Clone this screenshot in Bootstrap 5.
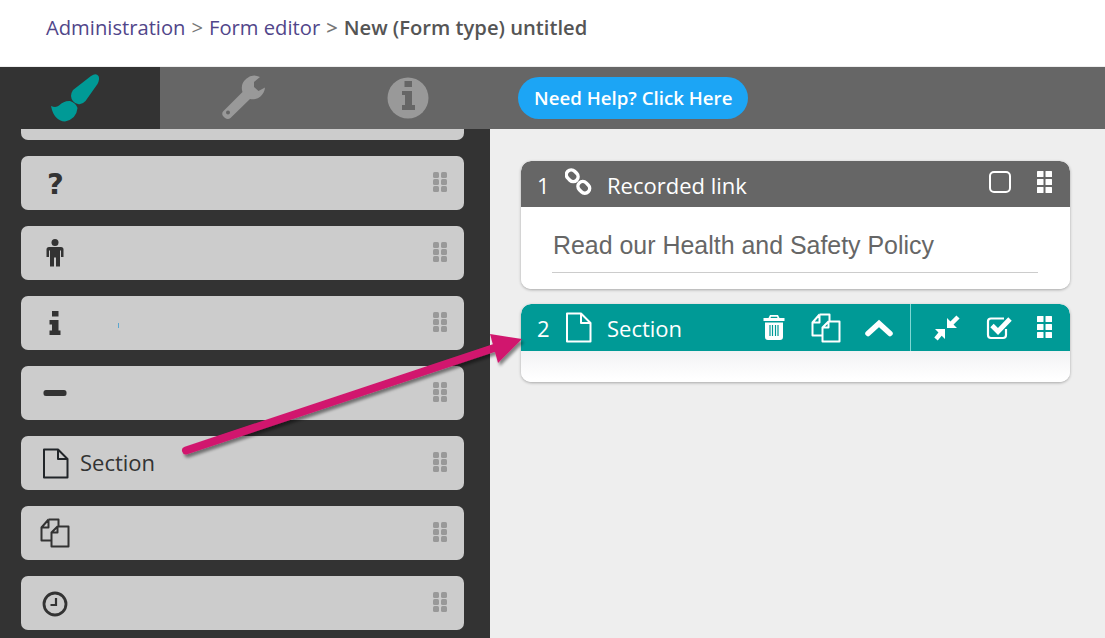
<!DOCTYPE html>
<html lang="en">
<head>
<meta charset="utf-8">
<title>Form editor</title>
<link href="https://cdn.jsdelivr.net/npm/bootstrap@5.3.0/dist/css/bootstrap.min.css" rel="stylesheet">
<style>
html,body{height:638px;overflow:hidden}
body{font-family:"Open Sans",sans-serif;background:#fff;color:#333;position:relative}
.crumbbar{height:67px;padding-left:46px;padding-bottom:11px;font-size:20.2px;border-bottom:1px solid #eee}
.breadcrumb{--bs-breadcrumb-divider:">";--bs-breadcrumb-margin-bottom:0;--bs-breadcrumb-item-padding-x:6px;--bs-breadcrumb-divider-color:#777;--bs-breadcrumb-item-active-color:#555}
.breadcrumb a{color:#51468a;text-decoration:none}
.breadcrumb .active{font-weight:600}
.leftcol{width:490px;flex:none;background:#333}
.tabrow{height:62px;background:#666}
.maintab{height:62px;width:165px;flex:none}
.maintab.first{width:160px;background:#333}
.helpbtn{--bs-btn-bg:#1ca5f5;--bs-btn-color:#fff;--bs-btn-hover-bg:#1ca5f5;--bs-btn-hover-color:#fff;--bs-btn-border-width:0;--bs-btn-border-radius:21px;--bs-btn-font-size:18.7px;--bs-btn-font-weight:600;--bs-btn-padding-x:16px;--bs-btn-padding-y:0;height:42px;margin-left:28px;line-height:42px;white-space:nowrap}
.tool-list{height:509px;overflow:hidden;padding:0 26px 0 21px;background:#333}
.tool{height:54px;background:#ccc;border-radius:7px;margin-bottom:16px;flex:none;color:#333;font-size:22px}
.tool.cut{margin-top:-43px}
.toolicon{width:50px;margin-left:9px;flex:none;display:flex;justify-content:center;align-items:center}
.tool-label{margin-top:-2px}
.qmark{font-family:"DejaVu Sans",sans-serif;font-weight:700;font-size:29px;line-height:1;color:#333;margin-top:3px;margin-left:1px}
.clockface{margin-top:2px}
.speck{width:1px;height:5px;background:#5ba6cf;margin-left:38px;margin-top:4px}
.grip{fill:currentColor}
.tool .grip-wrap{margin-left:auto;margin-right:17px;margin-top:-2px;color:#999;display:flex}
.canvas{background:#eee;padding:32px 35px 0 31px;min-width:0}
.fcard{--bs-card-border-width:0;--bs-card-border-radius:10px;--bs-card-inner-border-radius:10px;--bs-card-cap-padding-x:0;--bs-card-cap-padding-y:0;--bs-card-cap-bg:#666;--bs-card-cap-color:#fff;--bs-card-spacer-y:0;--bs-card-spacer-x:0;box-shadow:0 1px 3px rgba(0,0,0,.3);margin-bottom:15px;overflow:hidden}
.fcard .card-header{height:46px;font-size:22px;padding-left:16px;border-bottom:0;color:#fff;line-height:1}
.fcard.sel .card-header{height:47px;background:#009a96}
.fnum{width:28px;flex:none;line-height:1}
.ficon{width:27px;margin-right:15px;flex:none;display:flex;justify-content:center}
.flabel{line-height:1}
.fcard:not(.sel) .fnum,.fcard:not(.sel) .flabel{margin-top:2px}
.tools-right{margin-left:auto;height:100%;padding-right:18px}
.sepbar{width:1px;align-self:stretch;background:#7fd8d4}
.linkbody{height:82px;background:#fff;padding:0 32px 0 31px;border:0}
.linktext{font-family:"Liberation Sans",Arial,sans-serif;font-size:24.93px;color:#666;height:66px;line-height:76px;padding-left:1px;border-bottom:1px solid #ccc;white-space:nowrap}
.emptybody{height:31px;background:linear-gradient(180deg,#f2f2f4,#fff 90%)}
.arrowlay{position:absolute;left:0;top:0;pointer-events:none}
</style>
</head>
<body>
<svg width="0" height="0" class="d-none" aria-hidden="true">
  <symbol id="i-doc" viewBox="0 0 27 31"><path d="M2 1.5H16L25.500 11V29.500H2ZM16 1.500V11H25.500" fill="none" stroke="currentColor" stroke-width="2" stroke-linejoin="round"/></symbol>
  <symbol id="i-copy" viewBox="0 0 30 30"><path d="M8.500 1.500H18.500V8M8.500 1.500L1.500 9.500V22.500H11.500M8.500 1.500V9.500H1.500M17.500 8.500H28.500V28.500H11.500V14.500ZM17.500 8.500V14.500H11.500" fill="none" stroke="currentColor" stroke-width="2" stroke-linejoin="round"/></symbol>
  <symbol id="i-grip" viewBox="0 0 14 20"><g class="grip"><rect x="0" y="0" width="6" height="6" rx="1.500"/><rect x="8" y="0" width="6" height="6" rx="1.500"/><rect x="0" y="7" width="6" height="6" rx="1.500"/><rect x="8" y="7" width="6" height="6" rx="1.500"/><rect x="0" y="14" width="6" height="6" rx="1.500"/><rect x="8" y="14" width="6" height="6" rx="1.500"/></g></symbol>
  <symbol id="i-gripw" viewBox="0 0 15 22"><g class="grip"><rect x="0" y="0" width="6.500" height="6" rx=".5"/><rect x="8.500" y="0" width="6.500" height="6" rx=".5"/><rect x="0" y="8" width="6.500" height="6" rx=".5"/><rect x="8.500" y="8" width="6.500" height="6" rx=".5"/><rect x="0" y="16" width="6.500" height="6" rx=".5"/><rect x="8.500" y="16" width="6.500" height="6" rx=".5"/></g></symbol>
</svg>

<header class="crumbbar d-flex align-items-center">
  <nav aria-label="breadcrumb">
    <ol class="breadcrumb mb-0">
      <li class="breadcrumb-item"><a href="#">Administration</a></li>
      <li class="breadcrumb-item"><a href="#">Form editor</a></li>
      <li class="breadcrumb-item active" aria-current="page">New (Form type) untitled</li>
    </ol>
  </nav>
</header>

<div class="tabrow d-flex align-items-center">
  <div class="maintab first d-flex align-items-center justify-content-center">
    <svg width="60" height="55" viewBox="50 71 60 55"><path fill="#009a96" d="M91 76Q96 72.500 98.500 76Q100 79 97.500 84L85.500 101Q82 105 78 104Q71.500 102.500 71 96Q71 93 73 90ZM51 106Q56 108 59 105.500Q64 100.500 70 101Q76 103 77.500 108Q76.500 119 65 121.500Q54 121 51 106Z"/></svg>
  </div>
  <div class="maintab d-flex align-items-center justify-content-center">
    <svg width="48" height="46" viewBox="219 76 48 46"><path fill="#999" d="M260 78A12.500 12.500 0 0 0 242.500 93L223 112.500Q221.500 114.500 223 117L225 119Q228 121 230.500 119L250 100A12.500 12.500 0 0 0 265 88.500L258.500 92L254 88L254 83Z"/><circle cx="228" cy="113.500" r="2" fill="#666"/></svg>
  </div>
  <div class="maintab d-flex align-items-center justify-content-center">
    <svg width="42" height="42" viewBox="387 77 42 42"><circle cx="408" cy="98" r="20.500" fill="#999"/><path fill="#666" d="M404.500 81H412V87H404.500ZM402 91H412V105H415V110H402V105H405V95H402Z"/></svg>
  </div>
  <a href="#" class="btn helpbtn">Need Help? Click Here</a>
</div>

<div class="d-flex" style="height:509px">
  <aside class="leftcol tool-list d-flex flex-column">
    <div class="tool cut d-flex align-items-center"></div>
    <div class="tool d-flex align-items-center">
      <span class="toolicon"><span class="qmark">?</span></span>
      <span class="grip-wrap"><svg width="14" height="20"><use href="#i-grip"/></svg></span>
    </div>
    <div class="tool d-flex align-items-center">
      <span class="toolicon"><svg width="18" height="28" viewBox="0 0 18 28"><circle cx="9" cy="3.500" r="3.500" fill="#333"/><path fill="#333" d="M3 8H15Q17.500 8 17.500 10.500V18H15V11.500H14V27.500H10V18.500H8V27.500H4V11.500H3V18H.5V10.500Q.5 8 3 8Z"/></svg></span>
      <span class="grip-wrap"><svg width="14" height="20"><use href="#i-grip"/></svg></span>
    </div>
    <div class="tool d-flex align-items-center">
      <span class="toolicon"><svg width="12" height="24" viewBox="0 0 12 24"><path fill="#333" d="M3 0H9.500V5.500H3ZM.5 9H9.500V19.500H11.500V24H.5V19.500H3V13.500H.5Z"/></svg></span>
      <span class="speck"></span>
      <span class="grip-wrap"><svg width="14" height="20"><use href="#i-grip"/></svg></span>
    </div>
    <div class="tool d-flex align-items-center">
      <span class="toolicon"><svg width="24" height="8" viewBox="0 0 24 8"><rect x=".5" y="1" width="23" height="6" rx="2.500" fill="#333"/></svg></span>
      <span class="grip-wrap"><svg width="14" height="20"><use href="#i-grip"/></svg></span>
    </div>
    <div class="tool d-flex align-items-center">
      <span class="toolicon"><svg width="27" height="31" class="text-body"><use href="#i-doc"/></svg></span>
      <span class="tool-label">Section</span>
      <span class="grip-wrap"><svg width="14" height="20"><use href="#i-grip"/></svg></span>
    </div>
    <div class="tool d-flex align-items-center">
      <span class="toolicon"><svg width="30" height="30"><use href="#i-copy"/></svg></span>
      <span class="grip-wrap"><svg width="14" height="20"><use href="#i-grip"/></svg></span>
    </div>
    <div class="tool d-flex align-items-center">
      <span class="toolicon"><svg class="clockface" width="26" height="26" viewBox="0 0 26 26"><circle cx="13" cy="13" r="11" fill="none" stroke="#333" stroke-width="2.800"/><path d="M14 7V14H8.500" fill="none" stroke="#333" stroke-width="2.200"/></svg></span>
      <span class="grip-wrap"><svg width="14" height="20"><use href="#i-grip"/></svg></span>
    </div>
  </aside>

  <main class="canvas flex-grow-1">
    <section class="card fcard">
      <div class="card-header d-flex align-items-center">
        <span class="fnum">1</span>
        <span class="ficon"><svg width="28" height="28" viewBox="0 0 28 28" style="margin-top:-5px"><g fill="none" stroke="#fff" stroke-width="3.600"><rect x="1" y="2.500" width="13" height="10" rx="5" transform="rotate(45 7.500 7.500)"/><rect x="13" y="14.500" width="13" height="10" rx="5" transform="rotate(45 19.500 19.500)"/></g></svg></span>
        <span class="flabel">Recorded link</span>
        <div class="tools-right d-flex align-items-center">
          <svg width="24" height="24" viewBox="0 0 24 24" style="margin-right:25px;margin-top:-4px"><rect x="2" y="2" width="20" height="20" rx="4" fill="none" stroke="#fff" stroke-width="2"/></svg>
          <svg width="15" height="22" style="margin-top:-4px" class="text-white"><use href="#i-gripw"/></svg>
        </div>
      </div>
      <div class="card-body linkbody"><div class="linktext">Read our Health and Safety Policy</div></div>
    </section>

    <section class="card fcard sel">
      <div class="card-header d-flex align-items-center">
        <span class="fnum">2</span>
        <span class="ficon"><svg width="27" height="31" style="margin-top:-1px"><use href="#i-doc"/></svg></span>
        <span class="flabel">Section</span>
        <div class="tools-right d-flex align-items-center">
          <svg width="22" height="25" viewBox="0 0 22 25" style="margin-right:26px"><path fill="#fff" d="M7 0H15L16.500 3H21.500V6H.5V3H5.500ZM8 1.800L7.500 3H14.500L14 1.800ZM2 7.500H20V22Q20 25 17 25H5Q2 25 2 22Z"/><path stroke="#009a96" stroke-width="1.200" d="M7 10V21M9.500 10V21M12.500 10V21M15 10V21"/></svg>
          <svg width="30" height="30" style="margin-right:24px"><use href="#i-copy"/></svg>
          <svg width="28" height="18" viewBox="0 0 28 18" style="margin-right:17px"><path d="M3 14.500L14 4.500L25 14.500" fill="none" stroke="#fff" stroke-width="5.500" stroke-linecap="round" stroke-linejoin="miter"/></svg>
          <span class="sepbar"></span>
          <svg width="26" height="26" viewBox="0 0 26 26" style="margin:0 26px 0 23px"><path fill="#fff" d="M13 3V13H23ZM11 14H1L11 24Z"/><path d="M17 9L24 2M7 18L2 24" stroke="#fff" stroke-width="4.500" fill="none"/></svg>
          <svg width="27" height="24" viewBox="0 0 27 24" style="margin-right:24px"><path d="M18 2.500H5Q2 2.500 2 5.500V19Q2 22 5 22H17Q20 22 20 19V13" fill="none" stroke="#fff" stroke-width="2.200"/><path d="M6 9.500L12 15.500L24 3" fill="none" stroke="#fff" stroke-width="4.800"/></svg>
          <svg width="15" height="22" style="margin-top:-2px" class="text-white"><use href="#i-gripw"/></svg>
        </div>
      </div>
      <div class="card-body emptybody"></div>
    </section>
  </main>
</div>

<svg class="arrowlay" width="1105" height="638" viewBox="0 0 1105 638" aria-hidden="true">
  <defs><filter id="ds" x="-10%" y="-20%" width="120%" height="140%"><feDropShadow dx="2" dy="3" stdDeviation="1.800" flood-color="#000" flood-opacity=".45"/></filter></defs>
  <g filter="url(#ds)">
    <path d="M186 450.500L494 348" stroke="#d1186e" stroke-width="8" stroke-linecap="round" fill="none"/>
    <path d="M522 339L490 334L498 363Z" fill="#d1186e"/>
  </g>
</svg>
</body>
</html>
